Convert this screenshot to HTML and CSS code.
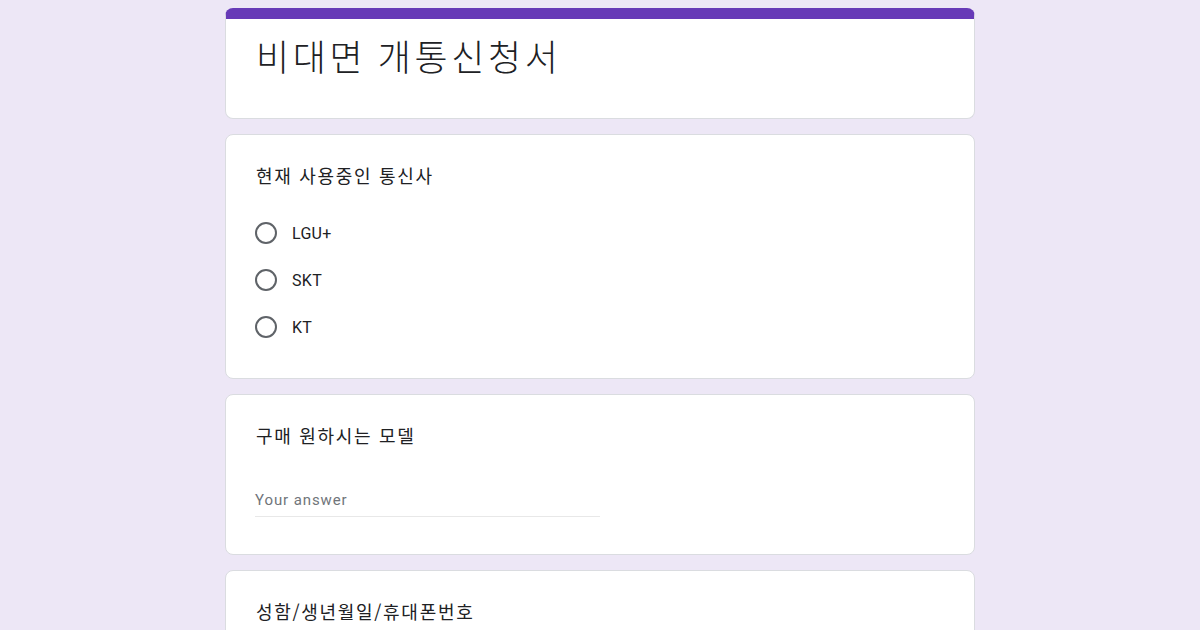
FILE: index.html
```html
<!DOCTYPE html>
<html lang="ko">
<head>
<meta charset="utf-8">
<title>비대면 개통신청서</title>
<link rel="stylesheet" href="styles.css">
</head>
<body>
<main class="form">
  <section class="card title-card">
    <h1 class="form-title">비대면 개통신청서</h1>
  </section>
  <section class="card question choice">
    <div class="q-title">현재 사용중인 통신사</div>
    <div class="options">
      <label class="option"><span class="radio"></span><span class="opt-text">LGU+</span></label>
      <label class="option"><span class="radio"></span><span class="opt-text">SKT</span></label>
      <label class="option"><span class="radio"></span><span class="opt-text">KT</span></label>
    </div>
  </section>
  <section class="card question text-q">
    <div class="q-title">구매 원하시는 모델</div>
    <div class="answer"><span class="placeholder">Your answer</span></div>
  </section>
  <section class="card question">
    <div class="q-title">성함/생년월일/휴대폰번호</div>
  </section>
</main>
</body>
</html>
```
FILE: styles.css
```css
html, body {
  margin: 0;
  padding: 0;
}
body {
  background: #ede7f6;
  font-family: Roboto, "Noto Sans CJK KR", sans-serif;
  color: #202124;
  height: 630px;
  overflow: hidden;
}
.form {
  width: 750px;
  margin: 8px auto 0;
  display: flex;
  flex-direction: column;
  gap: 15px;
}
.card {
  background: #fff;
  border: 1px solid #dadce0;
  border-radius: 8px;
  box-sizing: border-box;
}
.title-card {
  border-top: 11px solid #673ab7;
  height: 111px;
  padding: 12px 30px 0;
}
.form-title {
  margin: 0;
  font-family: "Noto Sans CJK KR", sans-serif;
  font-weight: 300;
  font-size: 36px;
  line-height: 48px;
  letter-spacing: 3.6px;
  word-spacing: -2px;
  color: #202124;
}
.question {
  padding: 28px 30px 28px;
}
.text-q {
  padding-bottom: 37px;
}
.q-title {
  font-family: "Noto Sans CJK KR", sans-serif;
  font-size: 18px;
  line-height: 24px;
  letter-spacing: 1.7px;
  color: #202124;
}
.options {
  margin-top: 22px;
  display: flex;
  flex-direction: column;
}
.option {
  height: 47px;
  display: flex;
  align-items: center;
  gap: 15px;
  margin-left: -1px;
}
.radio {
  width: 18px;
  height: 18px;
  border: 2px solid #5f6368;
  border-radius: 50%;
  flex: none;
}
.opt-text {
  font-family: Roboto, sans-serif;
  font-size: 16px;
  letter-spacing: 0.3px;
  color: #202124;
  padding-top: 2px;
}
.answer {
  margin-top: 41px;
  margin-left: -1px;
  width: 345px;
  border-bottom: 1px solid #e8e8e8;
  padding-bottom: 4px;
  line-height: 24px;
}
.placeholder {
  font-family: Roboto, sans-serif;
  font-size: 15px;
  color: #70757a;
  letter-spacing: 0.9px;
}
```
